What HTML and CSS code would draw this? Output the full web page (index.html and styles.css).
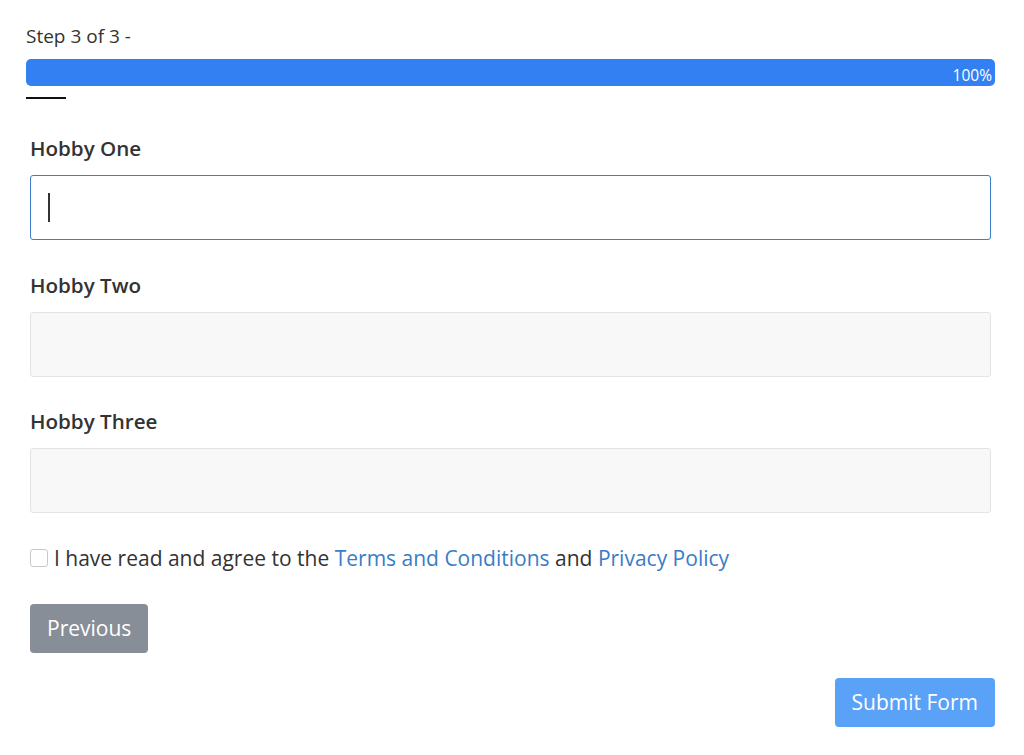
FILE: index.html
```html
<!DOCTYPE html>
<html lang="en">
<head>
<meta charset="utf-8">
<title>Step 3 of 3</title>
<link rel="stylesheet" href="styles.css">
</head>
<body>
<div class="page">
  <div class="step">Step 3 of 3 -</div>
  <div class="progress"><div class="progress-bar"><span class="progress-label">100%</span></div></div>
  <div class="rule"></div>
  <form class="form">
    <div class="field">
      <label class="label" for="h1">Hobby One</label>
      <div class="input-wrap">
        <input id="h1" class="input input-focus" type="text">
        <span class="caret"></span>
      </div>
    </div>
    <div class="field">
      <label class="label" for="h2">Hobby Two</label>
      <input id="h2" class="input" type="text">
    </div>
    <div class="field">
      <label class="label" for="h3">Hobby Three</label>
      <input id="h3" class="input" type="text">
    </div>
    <div class="agree">
      <input class="check" type="checkbox" id="agree">
      <label for="agree">I have read and agree to the <a class="link" href="#">Terms and Conditions</a> and <a class="link" href="#">Privacy Policy</a></label>
    </div>
    <div class="prev-row"><button type="button" class="btn btn-prev">Previous</button></div>
    <div class="submit-row"><button type="button" class="btn btn-submit">Submit Form</button></div>
  </form>
</div>
</body>
</html>
```
FILE: styles.css
```css
* { box-sizing: border-box; }
html, body { margin: 0; padding: 0; background: #fff; }
body {
  font-family: "Open Sans", "Liberation Sans", sans-serif;
  color: #333;
}
.page {
  width: 969px;
  margin-left: 26px;
  padding-top: 24px;
}
.step {
  font-size: 19px;
  line-height: 24px;
  color: #333;
}
.progress {
  margin-top: 11px;
  height: 27px;
  border-radius: 5px;
  background: #e9ecef;
  overflow: hidden;
}
.progress-bar {
  height: 100%;
  width: 100%;
  background: #3380f3;
  display: flex;
  align-items: flex-end;
  justify-content: flex-end;
}
.progress-label {
  color: #fff;
  font-size: 15.5px;
  line-height: 20px;
  padding-right: 3px;
  padding-bottom: 1px;
}
.rule {
  width: 40px;
  height: 2px;
  background: #111;
  margin-top: 11px;
}
.form {
  padding: 0 4px;
  margin-top: 35px;
}
.field { margin-bottom: 30.5px; }
.label {
  display: block;
  font-size: 20.6px;
  font-weight: 600;
  line-height: 28px;
  color: #333;
  margin-bottom: 13px;
}
.input-wrap { position: relative; }
.input {
  display: block;
  width: 100%;
  height: 65px;
  border: 1px solid #e3e3e3;
  border-radius: 3px;
  background: #f8f8f8;
  font-family: inherit;
  font-size: 20px;
  padding: 0 16px;
  outline: none;
}
.input-focus {
  background: #fff;
  border-color: #3d7dcc;
}
.caret {
  position: absolute;
  left: 18px;
  top: 18px;
  width: 2px;
  height: 29px;
  background: #333;
}
.agree {
  display: flex;
  align-items: center;
  font-size: 21px;
  line-height: 28px;
  color: #333;
}
.check {
  appearance: none;
  -webkit-appearance: none;
  width: 18px;
  height: 18px;
  margin: 0 6px 0 0;
  border: 1px solid #c8c8c8;
  border-radius: 3px;
  background: #fff;
  flex: none;
}
.link {
  color: #3a7cc6;
  text-decoration: none;
}
.prev-row { margin-top: 32px; }
.btn {
  font-family: inherit;
  font-size: 21px;
  line-height: 28px;
  color: #fff;
  border: none;
  border-radius: 4px;
  height: 49px;
  padding: 0 17px;
  white-space: nowrap;
  cursor: pointer;
}
.btn-prev { background: #878e97; }
.submit-row {
  display: flex;
  justify-content: flex-end;
  margin-top: 25px;
  margin-right: -4px;
}
.btn-submit {
  background: #5aa1f8;
  padding: 0 17px;
}
```
